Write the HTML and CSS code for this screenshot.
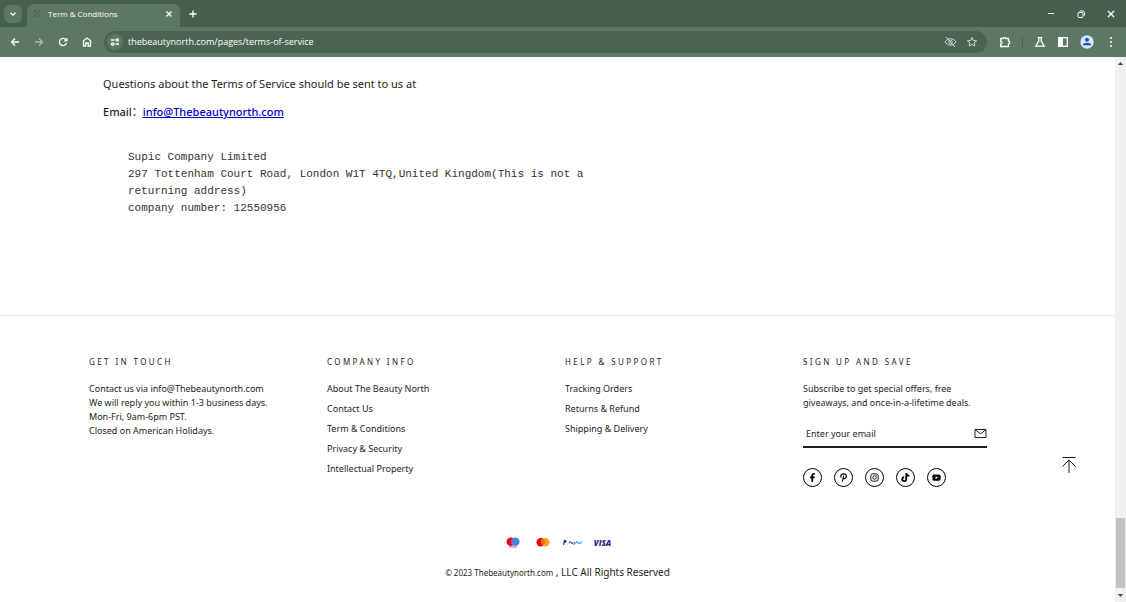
FILE: index.html
```html
<!DOCTYPE html>
<html lang="en">
<head>
<meta charset="utf-8">
<title>Term &amp; Conditions</title>
<link rel="stylesheet" href="styles.css">
</head>
<body>
<div class="browser">
  <header class="tabstrip">
    <button class="tab-search" aria-label="Search tabs"><svg width="8" height="8" viewBox="0 0 8 8"><path class="line" d="M1.5 2.7 4 5.2l2.500-2.500"/></svg></button>
    <div class="tab">
      <svg class="favicon" width="10" height="10" viewBox="0 0 10 10"><path d="M1 8 8 1M2 3l2-1M5 8l3-3"/></svg>
      <span class="tab-title">Term &amp; Conditions</span>
      <button class="plain" aria-label="Close tab"><svg width="8" height="8" viewBox="0 0 8 8"><path class="line" d="m1.500 1.500 5 5m0-5-5 5"/></svg></button>
    </div>
    <button class="plain new-tab" aria-label="New tab"><svg width="10" height="10" viewBox="0 0 10 10"><path class="line" d="M5 1.500v7M1.500 5h7"/></svg></button>
    <div class="window-controls">
      <button class="plain" aria-label="Minimize"><svg width="10" height="10" viewBox="0 0 10 10"><path class="line thin" d="M2 4.500h6"/></svg></button>
      <button class="plain" aria-label="Restore"><svg width="10" height="10" viewBox="0 0 10 10"><rect class="line thin" x="2" y="3.500" width="5" height="5" rx="1"/><path class="line thin" d="M3.500 2h3a2 2 0 0 1 2 2v2.500"/></svg></button>
      <button class="plain" aria-label="Close window"><svg width="10" height="10" viewBox="0 0 10 10"><path class="line" d="m2 2 6 6m0-6L2 8"/></svg></button>
    </div>
  </header>
  <nav class="toolbar" aria-label="Browser">
    <button class="plain" aria-label="Back"><svg width="12" height="12" viewBox="0 0 12 12"><path class="line" d="M10 6H2.500M6 2.500 2.500 6 6 9.500"/></svg></button>
    <button class="plain dim" aria-label="Forward"><svg width="12" height="12" viewBox="0 0 12 12"><path class="line" d="M2 6h7.500M6 2.500 9.500 6 6 9.500"/></svg></button>
    <button class="plain" aria-label="Reload"><svg width="12" height="12" viewBox="0 0 12 12"><path class="line" d="M9.500 7a3.600 3.600 0 1 1-.8-3.500L9.800 4.600"/><path class="solid" d="M10.500 1.500v4h-4z"/></svg></button>
    <button class="plain" aria-label="Home"><svg width="12" height="12" viewBox="0 0 12 12"><path class="line" d="M2.500 10V4.800L6 2l3.500 2.800V10H7.200V7H4.800v3z"/></svg></button>
    <div class="omnibox">
      <button class="site-info" aria-label="Site information"><svg width="10" height="10" viewBox="0 0 10 10"><path class="line" d="M1 3h3.500M5.500 7H9"/><circle class="line" cx="7.300" cy="3" r="1.200"/><circle class="line" cx="2.700" cy="7" r="1.200"/></svg></button>
      <input class="address" aria-label="Address" value="thebeautynorth.com/pages/terms-of-service">
      <button class="plain dim-light" aria-label="Third-party cookies blocked"><svg width="13" height="12" viewBox="0 0 13 12"><path class="line thin" d="M1 6c2.400-4.300 8.600-4.300 11 0-2.400 4.300-8.600 4.300-11 0zM2 1l9 10"/><circle class="line thin" cx="6.500" cy="6" r="1.800"/></svg></button>
      <button class="plain dim-light" aria-label="Bookmark this tab"><svg width="12" height="12" viewBox="0 0 12 12"><path class="line thin" d="m6 1.500 1.300 3 3.300.3-2.500 2.100.8 3.200L6 8.400l-2.900 1.700.8-3.200-2.500-2.100 3.300-.3z"/></svg></button>
    </div>
    <div class="actions">
      <button class="plain" aria-label="Extensions"><svg width="12" height="12" viewBox="0 0 12 12"><path class="line" d="M1.700 2.500h2.500a1.200 1.200 0 0 1 2.400 0h2.900v2.700a1.200 1.200 0 0 1 0 2.400v2.900H1.700V7.900a1.300 1.300 0 0 0 0-2.600z"/></svg></button>
      <span class="divider"></span>
      <button class="plain" aria-label="Labs"><svg width="12" height="12" viewBox="0 0 12 12"><path class="line" d="M3.500 1.700h5M4.800 2v3L1.700 10.200h8.600L7.200 5V2"/></svg></button>
      <button class="plain" aria-label="Side panel"><svg width="12" height="12" viewBox="0 0 12 12"><rect class="line" x="1.700" y="1.700" width="8.600" height="8.600"/><path class="solid" d="M1.700 1.700H6v8.600H1.700z"/></svg></button>
      <button class="plain" aria-label="Profile"><svg width="14" height="14" viewBox="0 0 14 14"><circle cx="7" cy="7" r="6.700" fill="#d5e5fb"/><circle cx="7" cy="4.800" r="2" fill="#1a4fc0"/><path d="M2.800 10.200C3.300 7 10.700 7 11.200 10.200z" fill="#1a4fc0"/></svg></button>
      <button class="plain" aria-label="Menu"><svg width="12" height="12" viewBox="0 0 12 12"><g class="solid"><circle cx="6" cy="2" r="1"/><circle cx="6" cy="6" r="1"/><circle cx="6" cy="10" r="1"/></g></svg></button>
    </div>
  </nav>
  <div class="viewport">
    <div class="page">
      <main class="terms">
        <p class="lead">Questions about the Terms of Service should be sent to us at</p>
        <p class="contact"><span>Email：</span><a href="mailto:info@Thebeautynorth.com">info@Thebeautynorth.com</a></p>
        <address class="company">Supic Company Limited<br>297 Tottenham Court Road, London W1T 4TQ,United Kingdom(This is not a<br>returning address)<br>company number: 12550956</address>
      </main>
      <footer class="footer">
        <div class="columns">
          <section>
            <h2>GET IN TOUCH</h2>
            <p>Contact us via info@Thebeautynorth.com<br>We will reply you within 1-3 business days.<br>Mon-Fri, 9am-6pm PST.<br>Closed on American Holidays.</p>
          </section>
          <section>
            <h2>COMPANY INFO</h2>
            <ul>
              <li><a href="#">About The Beauty North</a></li>
              <li><a href="#">Contact Us</a></li>
              <li><a href="#">Term &amp; Conditions</a></li>
              <li><a href="#">Privacy &amp; Security</a></li>
              <li><a href="#">Intellectual Property</a></li>
            </ul>
          </section>
          <section>
            <h2>HELP &amp; SUPPORT</h2>
            <ul>
              <li><a href="#">Tracking Orders</a></li>
              <li><a href="#">Returns &amp; Refund</a></li>
              <li><a href="#">Shipping &amp; Delivery</a></li>
            </ul>
          </section>
          <section>
            <h2>SIGN UP AND SAVE</h2>
            <p>Subscribe to get special offers, free<br>giveaways, and once-in-a-lifetime deals.</p>
            <form class="signup">
              <input type="email" placeholder="Enter your email" aria-label="Enter your email">
              <button class="plain" type="button" aria-label="Subscribe"><svg width="13" height="11" viewBox="0 0 13 11"><path class="line thin" d="M1 1.500h11v8H1zM1 1.500l4.500 3.600q1 .7 2 0L12 1.500"/></svg></button>
            </form>
            <div class="social">
              <a href="#" aria-label="Facebook"><svg width="11" height="11" viewBox="0 0 12 12"><path class="solid" d="M4.800 11V6.700H3.300V4.900h1.500V3.600C4.800 2 5.700 1 7.200 1h1.400v1.800h-.9c-.7 0-1 .3-1 1v1.100h1.900l-.3 1.800H6.700V11z"/></svg></a>
              <a href="#" aria-label="Pinterest"><svg width="11" height="11" viewBox="0 0 12 12"><path class="line" d="M3.600 6.300C2 3.700 4 2 6.200 2c2.200 0 3.200 1.500 2.800 3.200-.5 2.100-2.500 2.600-3.400 1.300M6.300 4 4.700 10.500"/></svg></a>
              <a href="#" aria-label="Instagram"><svg width="11" height="11" viewBox="0 0 12 12"><rect class="line thin" x="2" y="2" width="8" height="8" rx="2.200"/><circle class="line thin" cx="6" cy="6" r="1.900"/><circle class="solid" cx="8.300" cy="3.700" r=".5"/></svg></a>
              <a href="#" aria-label="TikTok"><svg width="11" height="11" viewBox="0 0 12 12"><path class="line note" d="M6.800 1v6.700A2.200 2.200 0 1 1 4.600 5.600M6.800 1.500c.3 1.700 1.500 2.700 3.400 2.800"/></svg></a>
              <a href="#" aria-label="YouTube"><svg width="11" height="11" viewBox="0 0 12 12"><rect class="solid" x="1.500" y="2.700" width="9" height="6.800" rx="1.800"/><path d="m5 4.500 2.700 1.600L5 7.700z" fill="#fff"/></svg></a>
            </div>
          </section>
        </div>
        <div class="payments">
          <svg width="14" height="11" viewBox="0 0 14 11" role="img" aria-label="Maestro"><circle cx="4.700" cy="4.700" r="4.200" fill="#eb001b"/><circle cx="9.300" cy="4.700" r="4.200" fill="#2f8fe8"/><path d="M7 1.200a4.200 4.200 0 0 1 0 7 4.200 4.200 0 0 1 0-7z" fill="#7375cf"/><path d="M3 10h8" stroke="#df5a6a"/></svg>
          <svg width="14" height="11" viewBox="0 0 14 11" role="img" aria-label="Mastercard"><circle cx="4.700" cy="5.200" r="4.200" fill="#eb001b"/><circle cx="9.300" cy="5.200" r="4.200" fill="#f79e1b"/><path d="M7 1.700a4.200 4.200 0 0 1 0 7 4.200 4.200 0 0 1 0-7z" fill="#ff5f00"/></svg>
          <span class="paypal"><svg width="4" height="5" viewBox="0 0 5 6" aria-hidden="true"><path d="M1 0h2.300C5 .2 5 3 3 3.300H1.900L1.500 6H0z" fill="#1a3480"/></svg><span>Pay<b>Pal</b></span></span>
          <span class="visa">VISA</span>
        </div>
        <p class="copyright"><small>© 2023 Thebeautynorth.com</small> , LLC All Rights Reserved</p>
      </footer>
      <button class="to-top" aria-label="Back to top"><svg width="16" height="18" viewBox="0 0 16 18"><path class="line thin" d="M1.500 1.500h13M8 17V4M1.500 10.500 8 4l6.500 6.500"/></svg></button>
    </div>
    <div class="scrollbar" aria-hidden="true">
      <svg width="7" height="5" viewBox="0 0 7 5"><path class="solid" d="M1 4 3.500 1 6 4z"/></svg>
      <div class="thumb"></div>
      <svg width="7" height="5" viewBox="0 0 7 5"><path class="solid" d="M1 1 3.500 4 6 1z"/></svg>
    </div>
  </div>
</div>
</body>
</html>
```
FILE: styles.css
```css
* { box-sizing: border-box; }
body { margin: 0; font-family: "Noto Sans", "Noto Sans CJK SC", sans-serif; color: #1c1d1d; background: #fff; }
h2, p, ul { margin: 0; padding: 0; }
ul { list-style: none; }
svg { display: block; flex: none; }
button, input { font: inherit; color: inherit; border: 0; padding: 0; background: none; }
.line { fill: none; stroke: currentColor; stroke-width: 1.3; }
.thin { stroke-width: 1; }
.solid { fill: currentColor; }

.browser { display: flex; flex-direction: column; height: 100vh; }
.plain { display: flex; align-items: center; justify-content: center; }

/* Browser frame */
.tabstrip { display: flex; align-items: center; height: 27px; padding: 0 5px 0 4px; background: #475f4f; color: #fff; }
.tab-search { display: flex; align-items: center; justify-content: center; width: 18px; height: 18px; border-radius: 6px; background: #5c7763; }
.tab { display: flex; align-items: center; gap: 6px; align-self: flex-end; width: 153px; height: 23px; margin-left: 5px; padding: 0 7px 3px 5px; border-radius: 7px 7px 0 0; background: #5c7763; }
.favicon { fill: none; stroke: #49564e; }
.tab-title { flex: 1; font: 8px/12px "Open Sans", sans-serif; }
.new-tab { margin-left: 8px; }
.window-controls { display: flex; gap: 20px; margin-left: auto; padding-right: 5px; }
.toolbar { display: flex; align-items: center; gap: 12px; height: 30px; padding: 0 9px; background: #5c7763; color: #fff; }
.dim { opacity: .5; }
.dim-light { opacity: .75; }
.omnibox { display: flex; flex: 1; align-items: center; gap: 9px; height: 22px; margin-left: -1px; padding: 0 9px 0 3px; border-radius: 11px; background: #4a6352; }
.site-info { display: flex; align-items: center; justify-content: center; width: 16px; height: 16px; border-radius: 8px; background: #5c7763; }
.address { flex: 1; min-width: 0; margin-left: -4px; font: 9px/14px "Open Sans", sans-serif; }
.actions { display: flex; align-items: center; gap: 11px; }
.divider { width: 1px; height: 10px; background: #4a6352; }

/* Page */
.viewport { display: flex; flex: 1; min-height: 0; }
.page { position: relative; flex: 1; overflow: hidden; }
.scrollbar { display: flex; flex-direction: column; align-items: center; width: 11px; padding: 4px 0; background: #f0f0f0; color: #444; }
.thumb { width: 9px; height: 70px; margin: auto 0 5px; background: #c1c1c1; }
.terms { padding: 19px 103px 98px; }
.lead { font-size: 11px; line-height: 16px; }
.contact { margin-top: 12px; font-size: 11px; line-height: 16px; font-weight: 500; }
.contact a { color: #00c; }
.company { margin: 29px 0 0 25px; font: 11px/17px "Liberation Mono", monospace; color: #333; }

.footer { padding: 39px 128px 0 89px; border-top: 1px solid #e8e8e8; font-size: 9px; line-height: 14px; }
.columns { display: grid; grid-template-columns: repeat(4, minmax(0, 1fr)); gap: 54px; min-height: 158px; }
.columns p { white-space: nowrap; }
h2 { margin-bottom: 13px; font-size: 8px; line-height: 14px; font-weight: 400; letter-spacing: .3em; white-space: nowrap; }
ul { display: grid; gap: 6px; }
.footer li a { color: inherit; text-decoration: none; }
.signup { display: flex; align-items: center; height: 27px; margin-top: 11px; border-bottom: 2px solid #1c1d1d; }
.signup input { flex: 1; min-width: 0; padding-left: 3px; outline: 0; }
.signup input::placeholder { color: #1c1d1d; opacity: 1; }
.social { display: flex; gap: 12px; margin-top: 20px; }
.social a { display: flex; align-items: center; justify-content: center; width: 19px; height: 19px; border: 1px solid #000; border-radius: 50%; color: #000; }
.note { stroke-width: 2; }
.payments { display: grid; grid-template-columns: repeat(4, 30px); align-items: center; justify-content: center; justify-items: center; margin: 24px -19px 0 20px; }
.paypal { display: flex; align-items: center; gap: 1px; font: italic 700 4px/8px "Open Sans", sans-serif; color: #1f4a9c; }
.paypal b { color: #239bd6; }
.visa { font: italic 800 8px/10px "Open Sans", sans-serif; color: #232a8a; }
.copyright { margin: 16px -19px 0 20px; text-align: center; font-size: 10px; line-height: 16px; }
.copyright small { font-size: 8px; }
.to-top { position: absolute; right: 38px; bottom: 128px; }
```
